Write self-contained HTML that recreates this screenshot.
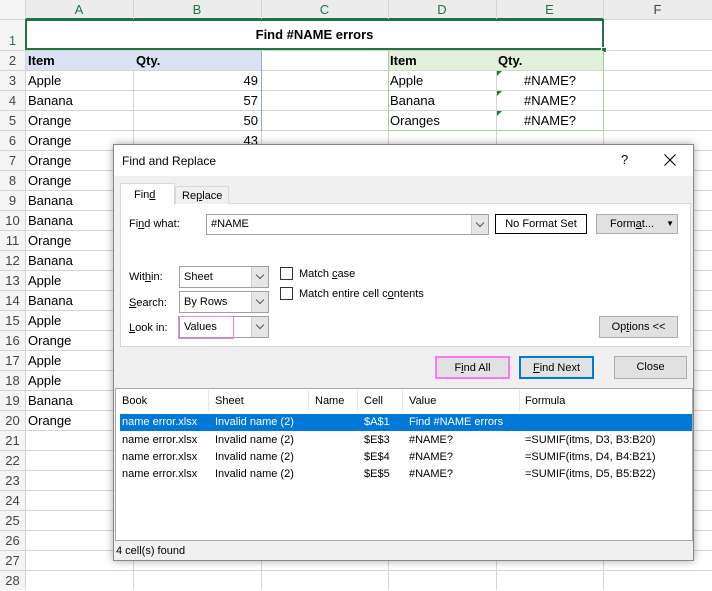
<!DOCTYPE html>
<html><head><style>
*{margin:0;padding:0;box-sizing:border-box}
body{width:712px;height:590px;overflow:hidden;background:#fff;font-family:"Liberation Sans",sans-serif;position:relative}
.a{position:absolute}
.hl{position:absolute;height:1px;background:#d4d4d4;left:0;width:712px}
.vl{position:absolute;width:1px;background:#d4d4d4;top:0;height:590px}
.rn{position:absolute;left:0;width:25px;text-align:center;font-size:13px;color:#444;line-height:20px}
.cl{position:absolute;top:0;height:19px;line-height:19px;text-align:center;font-size:13px;color:#444}
.t{position:absolute;font-size:13px;color:#000;line-height:20px;white-space:nowrap;padding-top:1px}
.d{font-size:11px;color:#000;white-space:nowrap}
.btn{position:absolute;background:#e1e1e1;border:1px solid #adadad;font-size:11px;text-align:center}
.sel{position:absolute;background:#fff;border:1px solid #a0a0a0;font-size:11px;padding-left:4px}
.sel i{position:absolute;right:0;top:0;bottom:0;width:17px;background:#e6e6e6;border-left:1px solid #ccc}
.sel i:after{content:"";position:absolute;left:5px;top:5px;width:5px;height:5px;border-right:1px solid #555;border-bottom:1px solid #555;transform:rotate(45deg)}
.cb{position:absolute;width:13px;height:13px;border:1px solid #333;background:#fff}
</style></head><body>
<div class="a" style="left:0;top:0;width:712px;height:19px;background:#ececec"></div>
<div class="a" style="left:0;top:0;width:25px;height:590px;background:#f5f5f5"></div>
<div class="cl" style="left:25px;width:108px;color:#217346">A</div>
<div class="cl" style="left:133px;width:128px;color:#217346">B</div>
<div class="cl" style="left:261px;width:127px;color:#217346">C</div>
<div class="cl" style="left:388px;width:108px;color:#217346">D</div>
<div class="cl" style="left:496px;width:107px;color:#217346">E</div>
<div class="cl" style="left:603px;width:109px">F</div>
<div class="a" style="left:25px;top:18px;width:578px;height:2px;background:#217346"></div>
<div class="vl" style="left:25px"></div><div class="vl" style="left:133px"></div><div class="vl" style="left:261px"></div><div class="vl" style="left:388px"></div><div class="vl" style="left:496px"></div><div class="vl" style="left:603px"></div>
<div class="hl" style="top:19px"></div><div class="hl" style="top:50px"></div>
<div class="hl" style="top:70px"></div><div class="hl" style="top:90px"></div><div class="hl" style="top:110px"></div><div class="hl" style="top:130px"></div><div class="hl" style="top:150px"></div><div class="hl" style="top:170px"></div><div class="hl" style="top:190px"></div><div class="hl" style="top:210px"></div><div class="hl" style="top:230px"></div><div class="hl" style="top:250px"></div><div class="hl" style="top:270px"></div><div class="hl" style="top:290px"></div><div class="hl" style="top:310px"></div><div class="hl" style="top:330px"></div><div class="hl" style="top:350px"></div><div class="hl" style="top:370px"></div><div class="hl" style="top:390px"></div><div class="hl" style="top:410px"></div><div class="hl" style="top:430px"></div><div class="hl" style="top:450px"></div><div class="hl" style="top:470px"></div><div class="hl" style="top:490px"></div><div class="hl" style="top:510px"></div><div class="hl" style="top:530px"></div><div class="hl" style="top:550px"></div><div class="hl" style="top:570px"></div>
<div class="rn" style="top:31px;color:#217346">1</div>
<div class="rn" style="top:51px">2</div><div class="rn" style="top:71px">3</div><div class="rn" style="top:91px">4</div><div class="rn" style="top:111px">5</div><div class="rn" style="top:131px">6</div><div class="rn" style="top:151px">7</div><div class="rn" style="top:171px">8</div><div class="rn" style="top:191px">9</div><div class="rn" style="top:211px">10</div><div class="rn" style="top:231px">11</div><div class="rn" style="top:251px">12</div><div class="rn" style="top:271px">13</div><div class="rn" style="top:291px">14</div><div class="rn" style="top:311px">15</div><div class="rn" style="top:331px">16</div><div class="rn" style="top:351px">17</div><div class="rn" style="top:371px">18</div><div class="rn" style="top:391px">19</div><div class="rn" style="top:411px">20</div><div class="rn" style="top:431px">21</div><div class="rn" style="top:451px">22</div><div class="rn" style="top:471px">23</div><div class="rn" style="top:491px">24</div><div class="rn" style="top:511px">25</div><div class="rn" style="top:531px">26</div><div class="rn" style="top:551px">27</div><div class="rn" style="top:571px">28</div>
<div class="a" style="left:25px;top:19px;width:579px;height:31px;background:#fff;border:2px solid #217346"></div>
<div class="a" style="left:601px;top:47px;width:6px;height:6px;background:#217346;border:1px solid #fff"></div>
<div class="t" style="left:25px;width:579px;top:24px;text-align:center;font-weight:bold">Find #NAME errors</div>
<div class="a" style="left:26px;top:51px;width:235px;height:19px;background:#d9e1f2"></div>
<div class="a" style="left:261px;top:51px;width:1px;height:80px;background:#8ea9db"></div>
<div class="t" style="left:28px;top:50px;font-weight:bold">Item</div>
<div class="t" style="left:136px;top:50px;font-weight:bold">Qty.</div>
<div class="t" style="left:28px;top:70px">Apple</div><div class="t" style="left:133px;width:125px;text-align:right;top:70px">49</div>
<div class="t" style="left:28px;top:90px">Banana</div><div class="t" style="left:133px;width:125px;text-align:right;top:90px">57</div>
<div class="t" style="left:28px;top:110px">Orange</div><div class="t" style="left:133px;width:125px;text-align:right;top:110px">50</div>
<div class="t" style="left:28px;top:130px">Orange</div><div class="t" style="left:133px;width:125px;text-align:right;top:130px">43</div>
<div class="t" style="left:28px;top:150px">Orange</div>
<div class="t" style="left:28px;top:170px">Orange</div>
<div class="t" style="left:28px;top:190px">Banana</div>
<div class="t" style="left:28px;top:210px">Banana</div>
<div class="t" style="left:28px;top:230px">Orange</div>
<div class="t" style="left:28px;top:250px">Banana</div>
<div class="t" style="left:28px;top:270px">Apple</div>
<div class="t" style="left:28px;top:290px">Banana</div>
<div class="t" style="left:28px;top:310px">Apple</div>
<div class="t" style="left:28px;top:330px">Orange</div>
<div class="t" style="left:28px;top:350px">Apple</div>
<div class="t" style="left:28px;top:370px">Apple</div>
<div class="t" style="left:28px;top:390px">Banana</div>
<div class="t" style="left:28px;top:410px">Orange</div>
<div class="a" style="left:388px;top:51px;width:215px;height:19px;background:#e2efda"></div>
<div class="a" style="left:388px;top:51px;width:216px;height:80px;border:1px solid #a9d08e;border-top:none"></div>
<div class="t" style="left:390px;top:50px;font-weight:bold">Item</div>
<div class="t" style="left:498px;top:50px;font-weight:bold">Qty.</div>
<div class="t" style="left:390px;top:70px">Apple</div><div class="t" style="left:496px;width:80px;text-align:right;top:70px">#NAME?</div>
<div class="t" style="left:390px;top:90px">Banana</div><div class="t" style="left:496px;width:80px;text-align:right;top:90px">#NAME?</div>
<div class="t" style="left:390px;top:110px">Oranges</div><div class="t" style="left:496px;width:80px;text-align:right;top:110px">#NAME?</div>
<div class="a" style="left:497px;top:71px;border-top:5px solid #1e7e34;border-right:5px solid transparent"></div>
<div class="a" style="left:497px;top:91px;border-top:5px solid #1e7e34;border-right:5px solid transparent"></div>
<div class="a" style="left:497px;top:111px;border-top:5px solid #1e7e34;border-right:5px solid transparent"></div>
<div class="a" style="left:113px;top:144px;width:581px;height:417px;background:#f0f0f0;border:1px solid #888;box-shadow:0 0 8px rgba(0,0,0,.35)">
 <div class="a" style="left:0;top:0;width:579px;height:31px;background:#fff"></div>
 <div class="a d" style="left:8px;top:9px;font-size:12px">Find and Replace</div>
 <div class="a d" style="left:507px;top:7px;font-size:13px">?</div>
 <svg class="a" style="left:550px;top:9px" width="12" height="12"><path d="M0.5 0.5L11.5 11.5M11.5 0.5L0.5 11.5" stroke="#000" stroke-width="1.1"/></svg>
 <div class="a" style="left:6px;top:58px;width:571px;height:144px;background:#fff;border:1px solid #d9d9d9"></div>
 <div class="a" style="left:6px;top:38px;width:55px;height:22px;background:#fff;border:1px solid #d9d9d9;border-bottom:none"></div>
 <div class="a d" style="left:20px;top:44px">Fin<u>d</u></div>
 <div class="a" style="left:61px;top:41px;width:54px;height:18px;background:#f0f0f0;border:1px solid #d9d9d9;border-bottom:none"></div>
 <div class="a d" style="left:68px;top:45px">Re<u>p</u>lace</div>
 <div class="a d" style="left:15px;top:73px">Fi<u>n</u>d what:</div>
 <div class="sel" style="left:92px;top:69px;width:283px;height:21px;line-height:19px">#NAME<i></i></div>
 <div class="a d" style="left:381px;top:69px;width:92px;height:20px;border:1px solid #000;background:#fff;text-align:center;line-height:18px">No Format Set</div>
 <div class="btn" style="left:482px;top:69px;width:82px;height:20px;line-height:18px;padding-right:10px">Form<u>a</u>t...<span style="position:absolute;right:3px;top:0;font-size:8px">▼</span></div>
 <div class="a d" style="left:15px;top:126px">Wit<u>h</u>in:</div>
 <div class="sel" style="left:65px;top:121px;width:90px;height:22px;line-height:20px">Sheet<i></i></div>
 <div class="a d" style="left:15px;top:152px"><u>S</u>earch:</div>
 <div class="sel" style="left:65px;top:146px;width:90px;height:22px;line-height:20px">By Rows<i></i></div>
 <div class="a d" style="left:15px;top:177px"><u>L</u>ook in:</div>
 <div class="sel" style="left:65px;top:171px;width:90px;height:22px;line-height:20px">Values<i></i></div>
 <div class="a" style="left:64px;top:171px;width:56px;height:23px;border:1px solid #f47cf0"></div>
 <div class="cb" style="left:166px;top:122px"></div><div class="a d" style="left:185px;top:123px">Match <u>c</u>ase</div>
 <div class="cb" style="left:166px;top:142px"></div><div class="a d" style="left:185px;top:143px">Match entire cell c<u>o</u>ntents</div>
 <div class="btn" style="left:485px;top:171px;width:79px;height:22px;line-height:20px">Op<u>t</u>ions &lt;&lt;</div>
 <div class="btn" style="left:321px;top:211px;width:75px;height:23px;line-height:20px;border:2px solid #f47cf0">F<u>i</u>nd All</div>
 <div class="btn" style="left:405px;top:211px;width:75px;height:23px;line-height:20px;border:2px solid #0078d7"><u>F</u>ind Next</div>
 <div class="btn" style="left:500px;top:211px;width:73px;height:23px;line-height:21px">Close</div>
 <div class="a" style="left:1px;top:243px;width:578px;height:153px;background:#fff;border:1px solid #aaa"></div>
 <div class="a" style="left:94px;top:245px;width:1px;height:22px;background:#e5e5e5"></div>
 <div class="a" style="left:194px;top:245px;width:1px;height:22px;background:#e5e5e5"></div>
 <div class="a" style="left:243px;top:245px;width:1px;height:22px;background:#e5e5e5"></div>
 <div class="a" style="left:288px;top:245px;width:1px;height:22px;background:#e5e5e5"></div>
 <div class="a" style="left:405px;top:245px;width:1px;height:22px;background:#e5e5e5"></div>
 <div class="a d" style="left:8px;top:250px">Book</div><div class="a d" style="left:101px;top:250px">Sheet</div><div class="a d" style="left:201px;top:250px">Name</div><div class="a d" style="left:250px;top:250px">Cell</div><div class="a d" style="left:295px;top:250px">Value</div><div class="a d" style="left:411px;top:250px">Formula</div>
 <div class="a" style="left:6px;top:269px;width:572px;height:17px;background:#0078d7"></div>
 <div class="a d" style="left:8px;top:271px;color:#fff">name error.xlsx</div><div class="a d" style="left:101px;top:271px;color:#fff">Invalid name (2)</div><div class="a d" style="left:250px;top:271px;color:#fff">$A$1</div><div class="a d" style="left:295px;top:271px;color:#fff">Find #NAME errors</div>
 <div class="a d" style="left:8px;top:289px">name error.xlsx</div><div class="a d" style="left:101px;top:289px">Invalid name (2)</div><div class="a d" style="left:250px;top:289px">$E$3</div><div class="a d" style="left:295px;top:289px">#NAME?</div><div class="a d" style="left:411px;top:289px">=SUMIF(itms, D3, B3:B20)</div>
 <div class="a d" style="left:8px;top:306px">name error.xlsx</div><div class="a d" style="left:101px;top:306px">Invalid name (2)</div><div class="a d" style="left:250px;top:306px">$E$4</div><div class="a d" style="left:295px;top:306px">#NAME?</div><div class="a d" style="left:411px;top:306px">=SUMIF(itms, D4, B4:B21)</div>
 <div class="a d" style="left:8px;top:323px">name error.xlsx</div><div class="a d" style="left:101px;top:323px">Invalid name (2)</div><div class="a d" style="left:250px;top:323px">$E$5</div><div class="a d" style="left:295px;top:323px">#NAME?</div><div class="a d" style="left:411px;top:323px">=SUMIF(itms, D5, B5:B22)</div>
 <div class="a d" style="left:2px;top:400px">4 cell(s) found</div>
</div>
</body></html>
